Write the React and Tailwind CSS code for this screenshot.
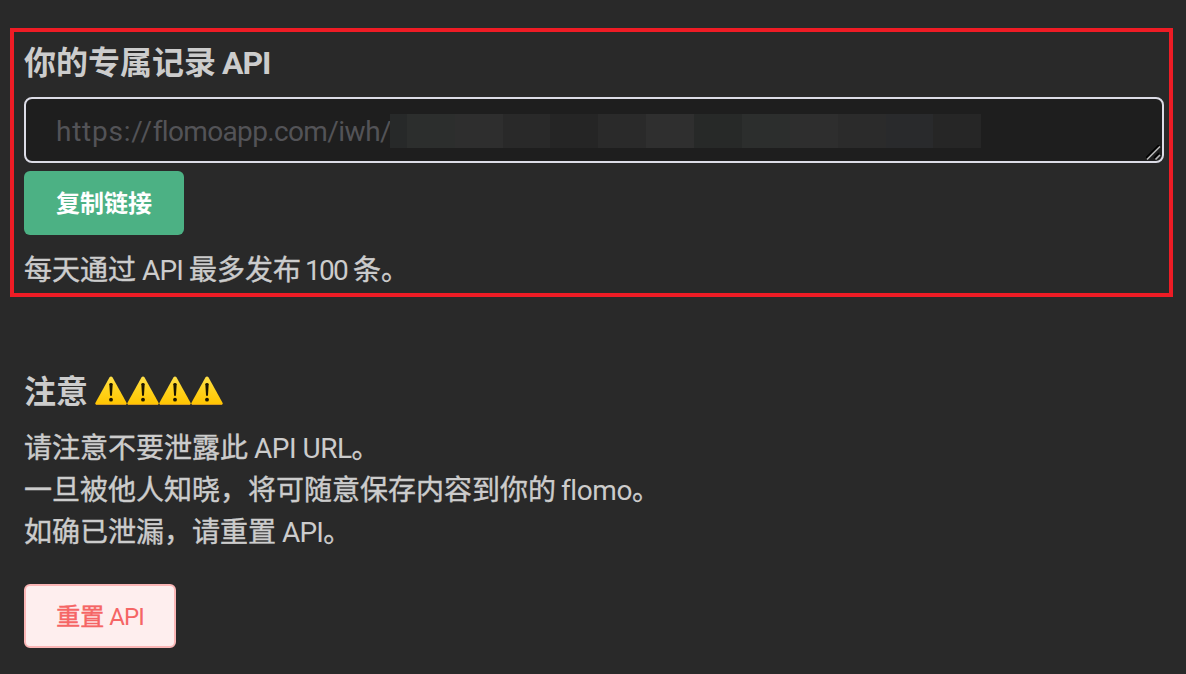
import React from 'react';

const MOSAIC = [
  'w-[17px] bg-[#272929]',
  'w-12 bg-[#2c2e2d]',
  'w-12 bg-[#2e2e2e]',
  'w-[47px] bg-[#292929]',
  'w-12 bg-[#252525]',
  'w-12 bg-[#2a2a2a]',
  'w-12 bg-[#2f2f2f]',
  'w-12 bg-[#272928]',
  'w-12 bg-[#2c2e2d]',
  'w-12 bg-[#2e2e2e]',
  'w-12 bg-[#2b2b2b]',
  'w-[47px] bg-[#292a2c]',
  'w-12 bg-[#262626]',
];

function Latin({ className, children }) {
  return <span className={`inline-block whitespace-pre [-webkit-text-stroke:0px] ${className}`}>{children}</span>;
}

function Warning() {
  return (
    <svg width="32" height="30" viewBox="0 0 32 30" aria-label="⚠️">
      <defs>
        <linearGradient id="warn" x1="0" y1="0" x2="0" y2="1">
          <stop offset="0" stopColor="#ffe04a" />
          <stop offset="0.5" stopColor="#ffd21c" />
          <stop offset="1" stopColor="#ffc400" />
        </linearGradient>
      </defs>
      <path d="M14.4 1.6Q16 -0.6 17.6 1.6L31.4 26.4Q32.4 28.8 30 29H2Q-0.4 28.8 0.6 26.4Z" fill="url(#warn)" />
      <path d="M1 28.5H31" stroke="#d99b1c" strokeWidth="1" />
      <path d="M14.3 8.3Q14.3 7 16 7Q17.7 7 17.7 8.3L17 19Q16.9 20 16 20Q15.1 20 15 19Z" fill="#1c1600" />
      <circle cx="16" cy="23.7" r="1.9" fill="#1c1600" />
    </svg>
  );
}

export default function App() {
  return (
    <main className="h-[674px] w-[1186px] overflow-hidden bg-[#292929] pt-7 pl-2.5 text-[#cccccc] [font-family:Roboto,'Noto_Sans_CJK_SC',sans-serif]">
      <section className="flex h-[269px] w-[1163px] flex-col items-start border-4 border-[#ee1c25] pl-2.5">
        <h1 className="mt-[7px] h-12 text-[32px] leading-[48px] font-bold whitespace-nowrap">
          你的专属记录<Latin className="ml-1.5 tracking-[-1.1px]">API</Latin>
        </h1>
        <div className="mt-2.5 flex h-[66px] w-[1140px] items-center rounded-lg border-2 border-[#dcdce6] bg-[#1e1e1e] pl-[30px]">
          <span className="w-[334px] pt-1 text-[28px] leading-[42px] whitespace-nowrap text-[#535357]">
            <span className="tracking-[0.75px]">https://</span>
            <span className="tracking-[-0.65px]">flomoapp.com</span>
            <span className="tracking-[-0.5px]">/iwh/</span>
          </span>
          <div className="mt-px flex h-[34px]">
            {MOSAIC.map((cell, i) => (
              <div key={i} className={cell} />
            ))}
          </div>
          <svg className="ml-auto self-end" width="16" height="16" viewBox="0 0 16 16" fill="none">
            <path d="M0 13L13 0M8 13L13 8" stroke="#000" strokeWidth="1.6" />
            <path d="M1 14.5L14 1.5M9.5 14.5L14 10" stroke="#b5b5b5" strokeWidth="1.6" />
          </svg>
        </div>
        <button className="mt-2 h-16 w-40 rounded-md bg-[#4cb184] pt-0.5 text-2xl font-bold text-white">复制链接</button>
        <p className="mt-[15px] text-[28px] leading-[42px] whitespace-nowrap [-webkit-text-stroke:0.4px]">
          每天通过<Latin className="ml-1.5 tracking-[-0.9px]">API</Latin>
          <span className="ml-1.5">最多发布</span>
          <Latin className="ml-1 tracking-[-1.7px]">100</Latin>
          <span className="ml-1.5">条。</span>
        </p>
      </section>

      <section className="flex flex-col items-start pt-[70px] pl-3.5">
        <h2 className="flex h-12 items-center text-[32px] leading-[48px] font-bold">
          <span className="pt-0.5">注意</span>
          <span className="ml-[7px] flex">
            <Warning />
            <Warning />
            <Warning />
            <Warning />
          </span>
        </h2>
        <div className="mt-[13px] text-[28px] leading-[42px] whitespace-nowrap [-webkit-text-stroke:0.4px]">
          <p>
            请注意不要泄露此<Latin className="ml-1.5 tracking-[-0.5px]">API URL</Latin>。
          </p>
          <p>
            一旦被他人知晓，将可随意保存内容到你的<Latin className="ml-[5px] tracking-[-0.4px]">flomo</Latin>。
          </p>
          <p>
            如确已泄漏，请重置<Latin className="ml-1.5 tracking-[-0.8px]">API</Latin>。
          </p>
        </div>
        <button className="mt-[30px] h-16 w-[152px] rounded-md border-2 border-[#fbb6b6] bg-[#feeeee] pt-0.5 text-2xl whitespace-nowrap text-[#f56565]">
          <span className="[-webkit-text-stroke:0.5px]">重置</span>
          <Latin className="ml-[5px] tracking-[-0.9px]">API</Latin>
        </button>
      </section>
    </main>
  );
}
